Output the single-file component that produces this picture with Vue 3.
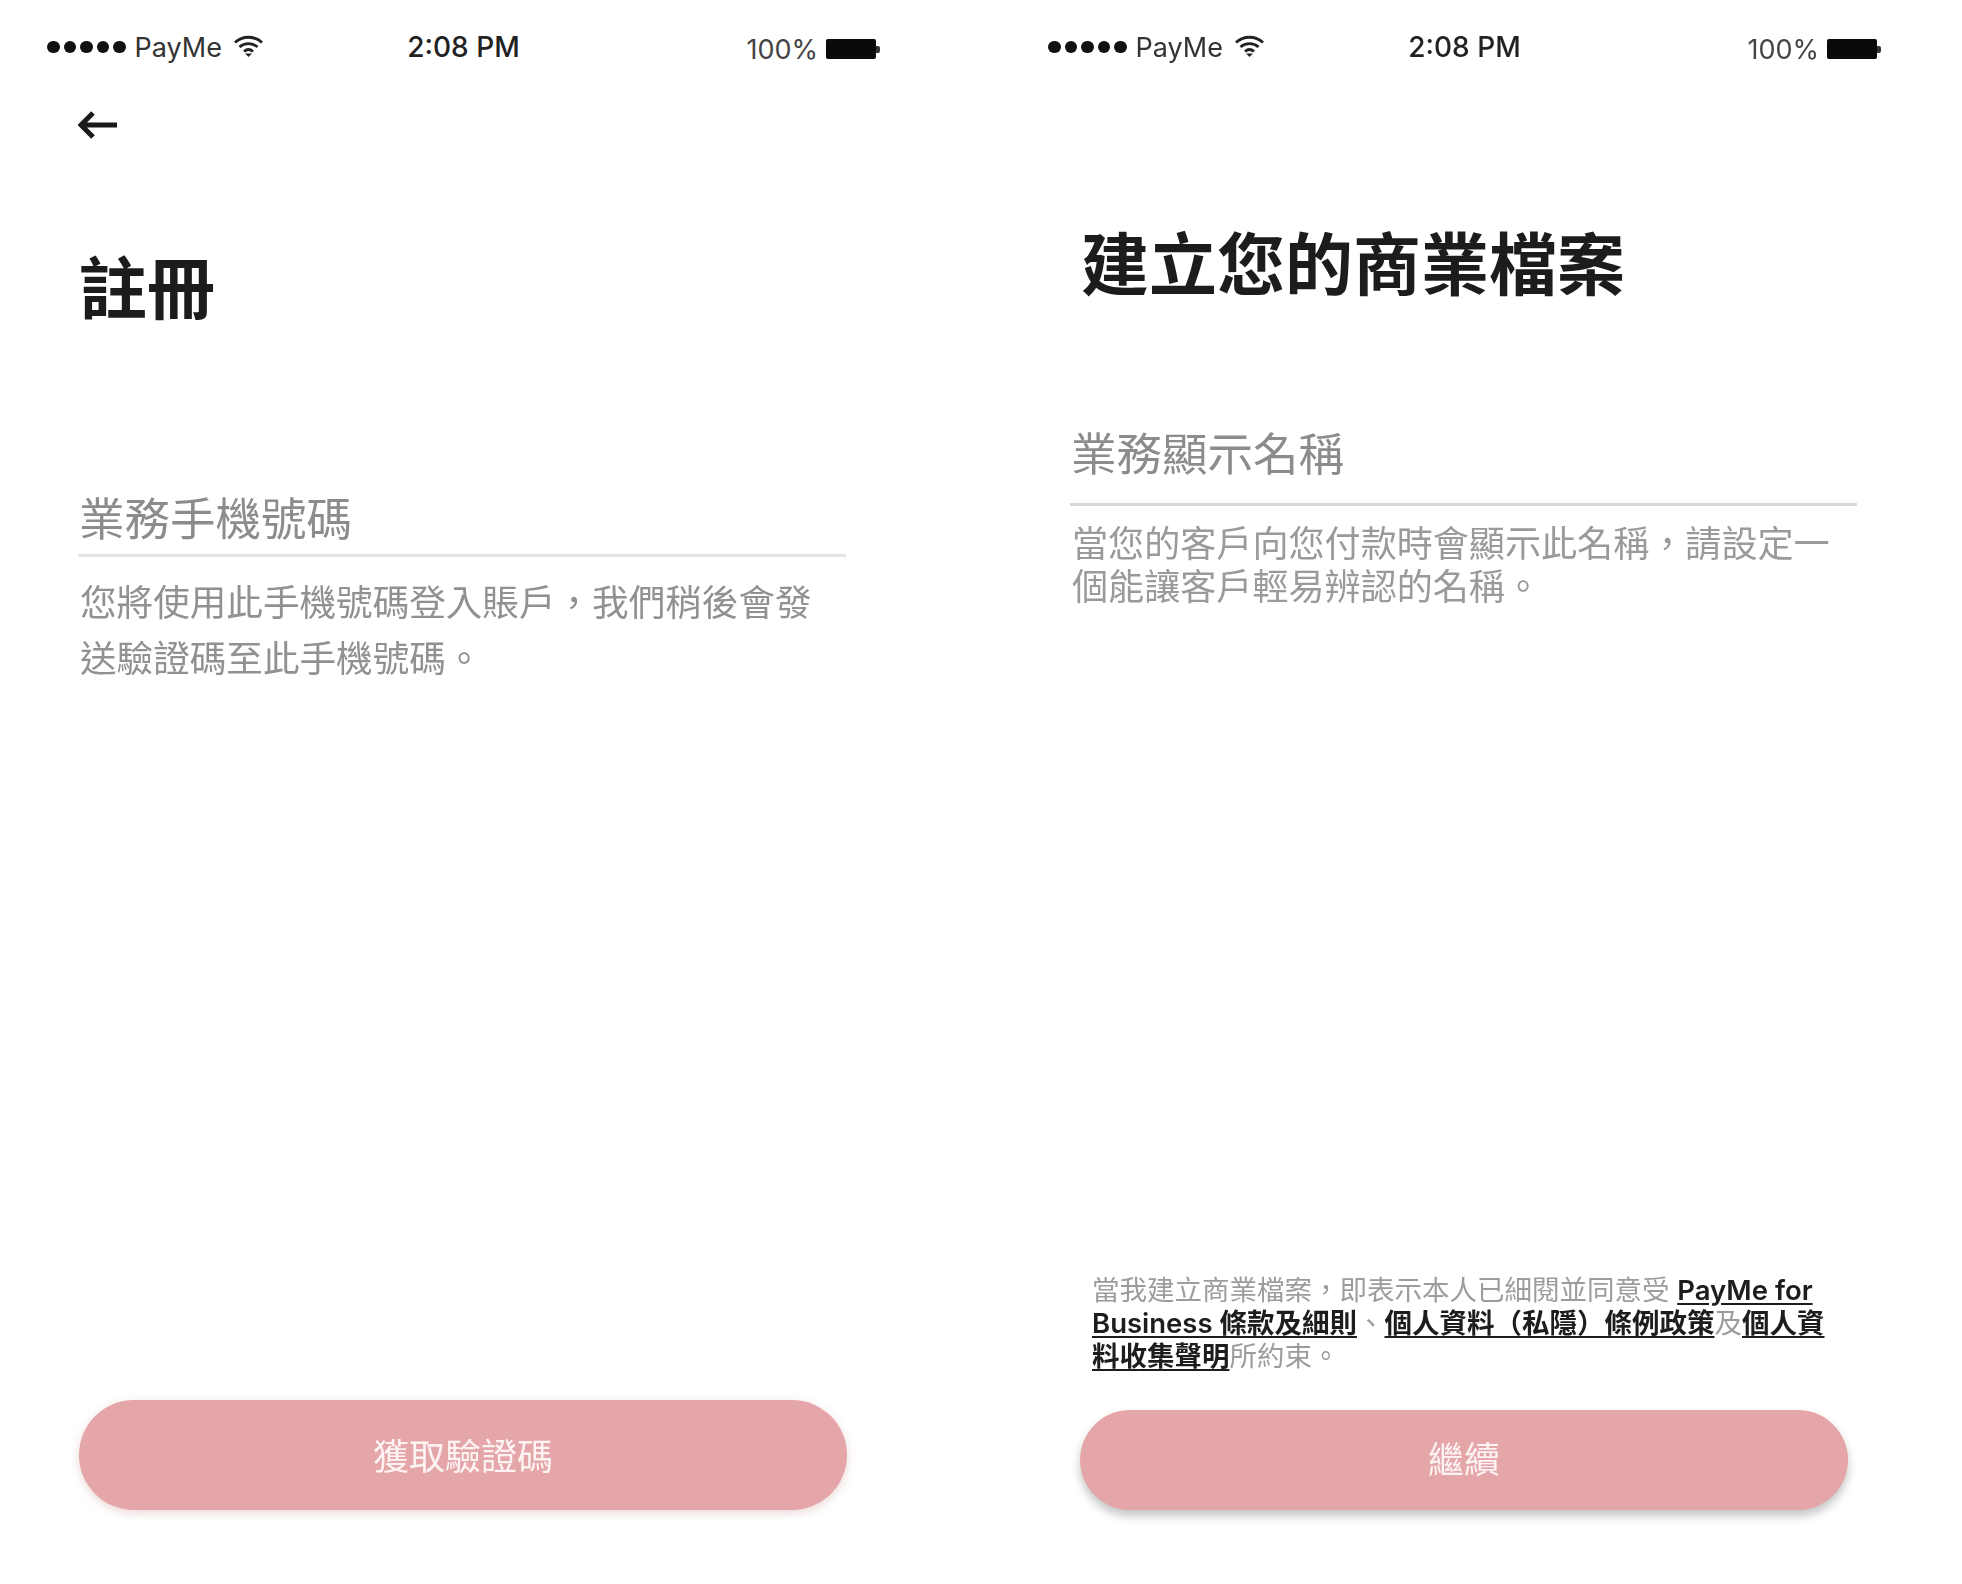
<script setup>
const dots = [1, 2, 3, 4, 5]
const wifi = 'M1 7.5C8.5 .5 20.5 .5 28 7.5M5.5 12C10.5 7.5 18.5 7.5 23.5 12M10 16.5C12.8 14 16.2 14 19 16.5'
</script>

<template>
  <main class="page">
    <section class="phone">
      <header class="status">
        <div class="carrier">
          <span class="dots"><i v-for="d in dots" :key="d"></i></span>
          <span>PayMe</span>
          <svg class="wifi" viewBox="0 0 29 22"><path :d="wifi" /><polygon points="11,18.5 18,18.5 14.5,22" /></svg>
        </div>
        <div class="time">2:08 PM</div>
        <div class="battery"><span>100%</span><span class="cell"></span><span class="nub"></span></div>
      </header>
      <button class="back" aria-label="返回">
        <svg viewBox="0 0 40 30"><path d="M39 15H3M15 3 3 15l12 12" /></svg>
      </button>
      <h1 class="title">註冊</h1>
      <div class="field first-field">
        <div class="placeholder">業務手機號碼</div>
      </div>
      <p class="help wide">您將使用此手機號碼登入賬戶，我們稍後會發送驗證碼至此手機號碼。</p>
      <button class="cta first-cta">獲取驗證碼</button>
    </section>

    <section class="phone second">
      <header class="status">
        <div class="carrier">
          <span class="dots"><i v-for="d in dots" :key="d"></i></span>
          <span>PayMe</span>
          <svg class="wifi" viewBox="0 0 29 22"><path :d="wifi" /><polygon points="11,18.5 18,18.5 14.5,22" /></svg>
        </div>
        <div class="time">2:08 PM</div>
        <div class="battery"><span>100%</span><span class="cell"></span><span class="nub"></span></div>
      </header>
      <h1 class="title business">建立您的商業檔案</h1>
      <div class="field second-field">
        <div class="placeholder">業務顯示名稱</div>
      </div>
      <p class="help tight">當您的客戶向您付款時會顯示此名稱，請設定一個能讓客戶輕易辨認的名稱。</p>
      <p class="terms">當我建立商業檔案，即表示本人已細閱並同意受 <a>PayMe for Business 條款及細則</a>、<a>個人資料（私隱）條例政策</a>及<a>個人資料收集聲明</a>所約束。</p>
      <button class="cta second-cta">繼續</button>
    </section>
  </main>
</template>

<style scoped>
.page {
  display: flex;
  width: 1962px;
  height: 1584px;
  background: #fff;
  font-family: Inter, "Noto Sans CJK TC", sans-serif;
  filter: blur(0.7px);
}
.phone {
  flex: 0 0 1001px;
  height: 1584px;
  display: flex;
  flex-direction: column;
  padding-bottom: 74px;
  box-sizing: border-box;
}
.status {
  height: 92px;
  padding: 29px 121px 0 47px;
  box-sizing: border-box;
  display: grid;
  grid-template-columns: 1fr auto 1fr;
  align-items: start;
  color: #222;
}
.carrier {
  display: flex;
  align-items: center;
  height: 36px;
  font-size: 27px;
  font-weight: 400;
  color: #333;
}
.dots {
  display: flex;
  gap: 4px;
  margin-right: 9px;
}
.dots i {
  width: 12.5px;
  height: 12.5px;
  border-radius: 50%;
  background: #111;
}
.wifi {
  width: 29px;
  height: 22px;
  margin-left: 12px;
  margin-top: -2px;
}
.wifi path {
  fill: none;
  stroke: #222;
  stroke-width: 2.8;
}
.wifi polygon {
  fill: #222;
}
.time {
  font-size: 28px;
  font-weight: 500;
  line-height: 36px;
  color: #222;
}
.battery {
  display: flex;
  align-items: center;
  justify-content: flex-end;
  height: 36px;
  margin-top: 2px;
  font-size: 27px;
  color: #444;
}
.cell {
  width: 50px;
  height: 20px;
  margin-left: 8px;
  background: #0a0a0a;
  border-radius: 2px;
}
.nub {
  width: 4px;
  height: 7px;
  background: #333;
  border-radius: 0 2px 2px 0;
}
.back {
  align-self: flex-start;
  width: 40px;
  height: 30px;
  margin: 18px 0 0 78px;
  padding: 0;
  border: 0;
  background: none;
}
.back svg {
  display: block;
  width: 40px;
  height: 30px;
}
.back path {
  fill: none;
  stroke: #1a1a1a;
  stroke-width: 5;
}
.title {
  margin: 104px 0 0 79px;
  font-size: 68px;
  line-height: 90px;
  font-weight: 700;
  color: #1c1c1c;
}
.title.business {
  margin: 128px 0 0 80px;
}
.field {
  border-bottom: 3px solid #e4e4e4;
}
.first-field {
  margin: 156px 155px 0 78px;
  padding: 0 1px 4px;
}
.second-field {
  margin: 115px 145px 0 69px;
  padding: 0 1px 18px;
  border-bottom-color: #d8d8d8;
}
.placeholder {
  font-size: 45.5px;
  line-height: 60px;
  color: #8c8c8c;
}
.help {
  margin: 0;
  color: #919191;
  font-size: 36.6px;
}
.wide {
  margin: 18px 160px 0 80px;
  line-height: 56px;
}
.tight {
  margin: 17px 155px 0 71px;
  font-size: 36.1px;
  line-height: 43px;
  color: #9a9a9a;
}
.terms {
  margin: auto 165px 0 91px;
  font-size: 27.5px;
  line-height: 33px;
  color: #9c9c9c;
}
.terms a {
  color: #1d1d1d;
  font-weight: 600;
  text-decoration: underline;
  text-underline-offset: 3px;
}
.cta {
  display: block;
  width: 768px;
  margin-left: 79px;
  border: 0;
  border-radius: 55px;
  background: #e4a6a9;
  color: #fdf3f3;
  font-family: inherit;
  font-size: 36px;
  padding: 0;
}
.first-cta {
  height: 110px;
  margin-top: auto;
  padding-bottom: 3px;
  box-shadow: 0 3px 10px rgba(200, 140, 140, 0.35);
}
.second-cta {
  height: 100px;
  margin-top: 37px;
  padding-bottom: 7px;
  box-shadow: 0 6px 10px rgba(110, 110, 110, 0.4);
}
</style>
